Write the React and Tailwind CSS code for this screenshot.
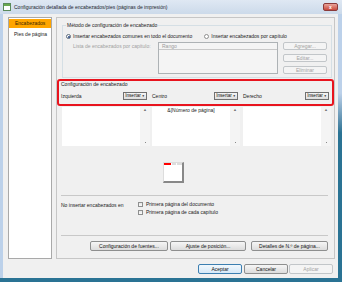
import React from 'react';

const font = { fontFamily: '"Liberation Sans", Arial, sans-serif' };

function Btn({ children, className = '', disabled = false, isDefault = false }) {
  const tone = disabled
    ? 'border-[#c2c6c9] bg-[#f4f4f4] text-[#a3a3a3]'
    : isDefault
      ? 'border-[#3c7fb1] bg-gradient-to-b from-[#f2f8fd] to-[#d6e9f8] text-[#111]'
      : 'border-[#8e8f8f] bg-gradient-to-b from-[#f6f6f6] to-[#dcdcdc] text-[#111]';
  return (
    <div className={`flex items-center justify-center rounded-[2px] border text-[5px] leading-none ${tone} ${className}`}>
      {children}
    </div>
  );
}

function InsertBtn() {
  return (
    <div className="flex h-[8px] w-[24px] items-center justify-center gap-[1px] border border-[#707070] bg-gradient-to-b from-[#f6f6f6] to-[#dedede] text-[4.6px] leading-none text-[#111]">
      Insertar<span className="text-[3px]">▼</span>
    </div>
  );
}

function TextBox({ children }) {
  return (
    <div className="flex h-[39px] w-[88px] bg-white">
      <div className="flex-1 pt-[1px] text-center text-[5px] leading-none text-[#222]">{children}</div>
      <div className="flex w-[10px] flex-col items-center justify-between bg-[#f4f4f4] py-[1px]">
        <span className="text-[4px] leading-none text-[#777]">▲</span>
        <span className="mb-[2px] h-[1px] w-[1px] bg-[#888]" />
      </div>
    </div>
  );
}

function Check({ label }) {
  return (
    <div className="flex items-center gap-[3px]">
      <span className="h-[5px] w-[5px] border border-[#8e8f8f] bg-gradient-to-b from-[#e8e8e8] to-[#fafafa]" />
      <span>{label}</span>
    </div>
  );
}

export default function App() {
  return (
    <div className="flex h-[282px] w-[342px] flex-col overflow-hidden bg-[#bcd1ea] text-[#1a1a1a]" style={font}>
      {/* barra de título */}
      <div className="flex h-[14px] items-center bg-gradient-to-b from-[#dfe8f3] to-[#ccdaea] pl-[3px] pr-[4px]">
        <svg width="8" height="8" viewBox="0 0 8 8">
          <rect x="0.5" y="0.5" width="7" height="7" fill="#fff" stroke="#5a8a5a" />
          <rect x="1" y="1" width="6" height="2" fill="#6aa84f" />
        </svg>
        <span className="ml-[3px] text-[5px] leading-none text-[#1e2630]">
          Configuración detallada de encabezados/pies (páginas de impresión)
        </span>
        <div className="ml-auto flex h-[8px] w-[15px] items-center justify-center rounded-[2px] border border-[#8b3a3a] bg-gradient-to-b from-[#e8a39a] to-[#c7473c]">
          <span className="text-[5px] font-bold leading-none text-white">x</span>
        </div>
      </div>

      <div className="flex flex-1">
        <div className="w-[3px] bg-[#bcd1ea]" />
        <div className="flex flex-1 flex-col bg-[#f0f0f0] text-[5px] leading-none">
          <div className="flex pl-[5px] pt-[3px]">
            {/* menú lateral */}
            <div className="flex h-[242px] w-[44px] flex-col border border-[#a9a9a9] bg-white pt-[1px]">
              <div className="flex h-[9px] items-center bg-[#ffa500] pl-[6px] text-[#3b2600]">Encabezados</div>
              <div className="mt-[2px] flex h-[9px] items-center pl-[5px]">Pies de página</div>
            </div>

            {/* panel principal */}
            <div className="ml-[4px] flex h-[242px] w-[279px] flex-col border border-[#c6c6c6] bg-[#f0f0f0]">
              <div className="ml-[5px] mr-[2px] mt-[7px] flex h-[53px] flex-col border border-[#d5dfe5] px-[3px]">
                <div className="-mt-[3px] self-start bg-[#f0f0f0] px-[1px]">Método de configuración de encabezado</div>
                <div className="mt-[6px] flex items-center">
                  <span className="flex h-[5px] w-[5px] items-center justify-center rounded-full border border-[#5a6a7a] bg-white">
                    <span className="h-[2px] w-[2px] rounded-full bg-[#1f3f7a]" />
                  </span>
                  <span className="ml-[2px]">Insertar encabezados comunes en todo el documento</span>
                  <span className="ml-[12px] h-[5px] w-[5px] rounded-full border border-[#8e8f8f] bg-white" />
                  <span className="ml-[2px]">Insertar encabezados por capítulo</span>
                </div>
                <div className="mt-[3px] flex">
                  <div className="ml-[7px] mt-[2px] w-[85px] text-[#a0a0a0]">Lista de encabezados por capítulo:</div>
                  <div className="h-[32px] w-[120px] border border-[#adb2b5] bg-[#f4f4f4]">
                    <div className="flex h-[7px] items-center border-b border-[#c8c8c8] pl-[3px] text-[#9a9a9a]">Rango</div>
                  </div>
                  <div className="ml-[5px] flex flex-col gap-[4px]">
                    <Btn disabled className="h-[8px] w-[44px]">Agregar...</Btn>
                    <Btn disabled className="h-[8px] w-[44px]">Editar...</Btn>
                    <Btn disabled className="h-[8px] w-[44px]">Eliminar</Btn>
                  </div>
                </div>
              </div>

              {/* configuración de encabezado resaltada */}
              <div className="mt-[1px] flex h-[27px] flex-col rounded-[3px] border-2 border-[#e8141e] pl-[2px]">
                <div className="mt-[1px]">Configuración de encabezado</div>
                <div className="mt-[5px] flex gap-[3px]">
                  <div className="flex w-[88px] items-center justify-between pr-[2px]">
                    <span>Izquierda</span>
                    <InsertBtn />
                  </div>
                  <div className="flex w-[88px] items-center justify-between pr-[2px]">
                    <span>Centro</span>
                    <InsertBtn />
                  </div>
                  <div className="flex w-[88px] items-center justify-between pr-[2px]">
                    <span>Derecho</span>
                    <InsertBtn />
                  </div>
                </div>
              </div>

              <div className="ml-[5px] mt-[1px] flex gap-[2px]">
                <TextBox />
                <TextBox>&amp;[Número de página]</TextBox>
                <div className="ml-[1px]">
                  <TextBox />
                </div>
              </div>

              {/* vista previa */}
              <div className="ml-[106px] mt-[16px] flex h-[21px] w-[21px] flex-col border-b-2 border-l border-r-2 border-t border-b-[#888] border-l-[#ddd] border-r-[#888] border-t-[#ddd] bg-white">
                <div className="flex gap-[1px]">
                  <span className="h-[2px] w-[7px] bg-[#f00]" />
                  <span className="h-[2px] w-[5px] bg-[#ddd]" />
                  <span className="h-[2px] w-[5px] bg-[#ddd]" />
                </div>
              </div>

              <div className="ml-[4px] mr-[6px] mt-[12px] h-[1px] bg-[#c8c8c8]" />

              <div className="ml-[4px] mt-[6px] flex">
                <div className="mt-[1px] w-[77px]">No insertar encabezados en</div>
                <div className="flex flex-col gap-[3px]">
                  <Check label="Primera página del documento" />
                  <Check label="Primera página de cada capítulo" />
                </div>
              </div>

              <div className="ml-[4px] mr-[6px] mt-[20px] h-[1px] bg-[#c8c8c8]" />

              <div className="ml-[33px] mt-[5px] flex">
                <Btn className="h-[10px] w-[78px]">Configuración de fuentes...</Btn>
                <Btn className="ml-[2px] h-[10px] w-[76px]">Ajuste de posición...</Btn>
                <Btn className="ml-[5px] h-[10px] w-[77px]">Detalles de N.º de página...</Btn>
              </div>
            </div>
          </div>

          <div className="mt-[5px] flex justify-end pr-[5px]">
            <Btn isDefault className="h-[10px] w-[44px]">Aceptar</Btn>
            <Btn className="ml-[2px] h-[10px] w-[44px]">Cancelar</Btn>
            <Btn disabled className="ml-[1px] h-[10px] w-[44px]">Aplicar</Btn>
          </div>
        </div>
        <div className="w-[4px] bg-gradient-to-b from-[#bcd1ea] via-[#bcd1ea] via-30% to-[#2a7394] to-45%" />
      </div>
      <div className="h-[4px] bg-[#2a7394]" />
    </div>
  );
}
